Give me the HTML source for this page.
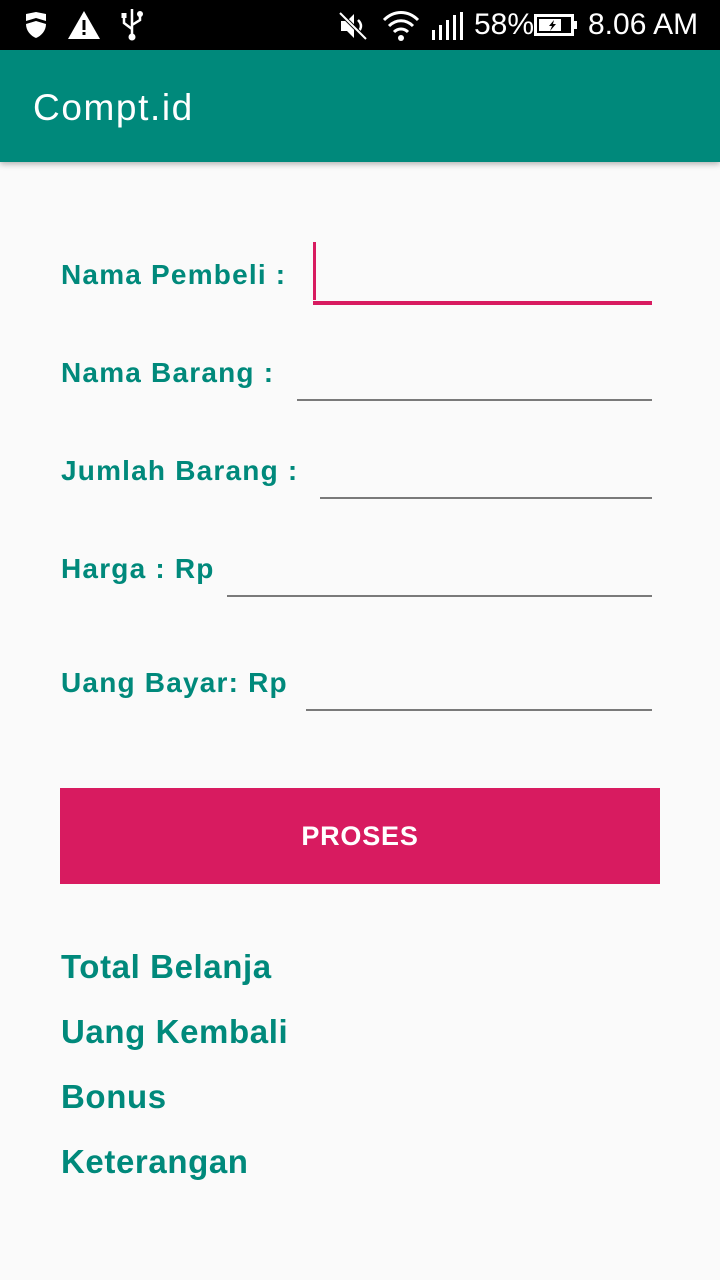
<!DOCTYPE html>
<html><head><meta charset="utf-8"><style>
*{margin:0;padding:0;box-sizing:border-box}
body{width:720px;height:1280px;background:#FAFAFA;font-family:"Liberation Sans",sans-serif;position:relative;overflow:hidden}
.a{position:absolute}
.lbl{position:absolute;left:61px;color:#00897B;font-weight:bold;font-size:28px;line-height:1;letter-spacing:1.2px}
.ln{position:absolute;height:2px;background:#7a7a7a;right:68px}
.res{position:absolute;left:61px;color:#00897B;font-weight:bold;font-size:33px;line-height:1;letter-spacing:0.6px}
</style></head><body>
<div class="a" style="left:0;top:0;width:720px;height:50px;background:#000;color:#fff">
<svg class="a" style="left:24px;top:12px" width="24" height="26" viewBox="0 0 24 26"><path d="M2 2 L12 0 L22 2 L22 9 L12 6 L2 9Z M2 12 L12 9 L22 12 C22 19 17 24 12 26 C7 24 2 19 2 12Z" fill="#fff"/></svg>
<svg class="a" style="left:68px;top:11px" width="32" height="28" viewBox="0 0 32 28"><path d="M16 0 L32 28 L0 28Z" fill="#fff"/><rect x="14.5" y="9" width="3" height="10" fill="#000"/><rect x="14.5" y="21" width="3" height="3" fill="#000"/></svg>
<svg class="a" style="left:120px;top:9px" width="24" height="32" viewBox="0 0 24 32"><path d="M12 0 L12 28 M12 20 L4 14 L4 8 M12 16 L20 11 L20 6" stroke="#fff" stroke-width="2.5" fill="none"/><circle cx="12" cy="28" r="3.5" fill="#fff"/><rect x="1.5" y="4" width="5" height="5" fill="#fff"/><circle cx="20" cy="5" r="3" fill="#fff"/></svg>
<svg class="a" style="left:338px;top:11px" width="30" height="30" viewBox="0 0 30 30"><path d="M3 10 H9 L16 3 V27 L9 20 H3Z" fill="#fff"/><path d="M20 9 C24 13 24 17 20 21" stroke="#fff" stroke-width="2.5" fill="none"/><path d="M2 2 L28 28" stroke="#000" stroke-width="4"/><path d="M2 2 L28 28" stroke="#fff" stroke-width="2"/></svg>
<svg class="a" style="left:382px;top:10px" width="38" height="32" viewBox="0 0 38 32"><path d="M2 10 C12 0 26 0 36 10 M7 16 C14 9 24 9 31 16 M12 22 C16 18 22 18 26 22" stroke="#fff" stroke-width="3" fill="none"/><circle cx="19" cy="28" r="3" fill="#fff"/></svg>
<svg class="a" style="left:432px;top:12px" width="34" height="28" viewBox="0 0 34 28"><rect x="0" y="18" width="3" height="10" fill="#fff"/><rect x="7" y="13" width="3" height="15" fill="#fff"/><rect x="14" y="8" width="3" height="20" fill="#fff"/><rect x="21" y="3" width="3" height="25" fill="#fff"/><rect x="28" y="0" width="3" height="28" fill="#fff"/></svg>
<div class="a" style="left:474px;top:8px;font-size:30px;line-height:34px">58%</div>
<svg class="a" style="left:534px;top:14px" width="44" height="22" viewBox="0 0 44 22"><rect x="1.5" y="1.5" width="37" height="19" fill="none" stroke="#fff" stroke-width="3"/><rect x="39" y="7" width="4" height="8" fill="#fff"/><rect x="5" y="5" width="22" height="12" fill="#fff"/><path d="M20 6 L15 12 H18 L16 17 L22 10 H19Z" fill="#000"/></svg>
<div class="a" style="left:588px;top:8px;font-size:30px;line-height:34px">8.06 AM</div>
</div>
<div class="a" style="left:0;top:50px;width:720px;height:112px;background:#00897B;box-shadow:0 2px 6px rgba(0,0,0,0.3)"></div>
<div class="a" style="left:33px;top:88px;color:#fff;font-size:37px;line-height:40px;letter-spacing:1.6px">Compt.id</div>

<div class="lbl" style="top:261px">Nama Pembeli :</div>
<div class="a" style="left:313px;top:242px;width:3px;height:58px;background:#D81B60"></div>
<div class="a" style="left:313px;top:301px;width:339px;height:4px;background:#D81B60"></div>

<div class="lbl" style="top:359px">Nama Barang :</div>
<div class="ln" style="left:297px;top:399px"></div>
<div class="lbl" style="top:457px">Jumlah Barang :</div>
<div class="ln" style="left:320px;top:497px"></div>
<div class="lbl" style="top:555px">Harga : Rp</div>
<div class="ln" style="left:227px;top:595px"></div>
<div class="lbl" style="top:669px">Uang Bayar: Rp</div>
<div class="ln" style="left:306px;top:709px"></div>

<div class="a" style="left:60px;top:788px;width:600px;height:96px;background:#D81B60;color:#fff;font-weight:bold;font-size:27px;text-align:center;line-height:96px;letter-spacing:0.8px">PROSES</div>

<div class="res" style="top:950px">Total Belanja</div>
<div class="res" style="top:1015px">Uang Kembali</div>
<div class="res" style="top:1080px">Bonus</div>
<div class="res" style="top:1145px">Keterangan</div>
</body></html>
